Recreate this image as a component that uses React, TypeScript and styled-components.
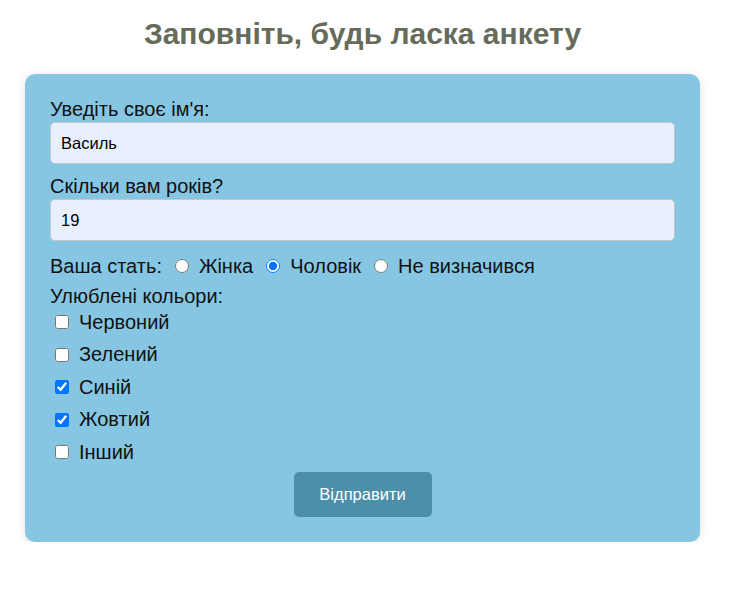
import React from "react";
import styled, { createGlobalStyle } from "styled-components";

const Global = createGlobalStyle`
  html, body { margin: 0; padding: 0; background: #ffffff; }
  body { font-family: "Liberation Sans", Arial, sans-serif; }
`;

const Page = styled.div`
  width: 675px;
  margin: 0 0 0 25px;
  padding-top: 14px;
`;

const Title = styled.h1`
  margin: 0 0 20px;
  text-align: center;
  font-size: 30px;
  line-height: 40px;
  font-weight: bold;
  color: #666b5a;
`;

const Card = styled.form`
  background: #87c6e3;
  border-radius: 10px;
  box-shadow: 0 2px 10px rgba(0, 0, 0, 0.12);
  padding: 24px 25px 25px;
  display: flex;
  flex-direction: column;
  font-size: 20px;
  color: #111;
`;

const Label = styled.label`
  display: block;
  font-size: 20px;
  line-height: 22px;
  margin-bottom: 2px;
`;

const Input = styled.input`
  box-sizing: border-box;
  width: 100%;
  height: 42px;
  padding: 0 10px;
  border: 1px solid #c4c8cc;
  border-radius: 5px;
  background: #e8f0fe;
  font-family: "Liberation Sans", Arial, sans-serif;
  font-size: 16.5px;
  color: #000;
  margin-bottom: 11px;
  outline: none;
`;

const GenderRow = styled.div`
  display: flex;
  align-items: center;
  font-size: 20px;
  line-height: 22px;
  margin-top: 3px;
  margin-bottom: 8px;
`;

const RadioLabel = styled.label`
  display: inline-flex;
  align-items: center;
`;

const Radio = styled.input`
  margin: 0 10px 0 13px;
  width: 14px;
  height: 14px;
`;

const SectionTitle = styled.div`
  font-size: 20px;
  line-height: 22px;
`;

const CheckList = styled.div`
  display: flex;
  flex-direction: column;
  margin-top: -1px;
`;

const CheckRow = styled.label`
  display: flex;
  align-items: center;
  height: 32.5px;
  font-size: 20px;
`;

const Check = styled.input`
  margin: 0 10px 0 5px;
  width: 14px;
  height: 14px;
`;

const Submit = styled.button`
  align-self: center;
  margin-top: 3px;
  width: 138px;
  height: 45px;
  border: none;
  border-radius: 5px;
  background: #4b8fa9;
  color: #ffffff;
  font-family: "Liberation Sans", Arial, sans-serif;
  font-size: 16.5px;
  cursor: pointer;
`;

const colors = [
  { name: "Червоний", checked: false },
  { name: "Зелений", checked: false },
  { name: "Синій", checked: true },
  { name: "Жовтий", checked: true },
  { name: "Інший", checked: false },
];

export default function App() {
  return (
    <>
      <Global />
      <Page>
        <Title>Заповніть, будь ласка анкету</Title>
        <Card onSubmit={(e) => e.preventDefault()}>
          <Label htmlFor="name">Уведіть своє ім'я:</Label>
          <Input id="name" defaultValue="Василь" />
          <Label htmlFor="age">Скільки вам років?</Label>
          <Input id="age" defaultValue="19" />
          <GenderRow>
            Ваша стать:
            <RadioLabel>
              <Radio type="radio" name="g" />
              Жінка
            </RadioLabel>
            <RadioLabel>
              <Radio type="radio" name="g" defaultChecked />
              Чоловік
            </RadioLabel>
            <RadioLabel>
              <Radio type="radio" name="g" />
              Не визначився
            </RadioLabel>
          </GenderRow>
          <SectionTitle>Улюблені кольори:</SectionTitle>
          <CheckList>
            {colors.map((c) => (
              <CheckRow key={c.name}>
                <Check type="checkbox" defaultChecked={c.checked} />
                {c.name}
              </CheckRow>
            ))}
          </CheckList>
          <Submit type="submit">Відправити</Submit>
        </Card>
      </Page>
    </>
  );
}
